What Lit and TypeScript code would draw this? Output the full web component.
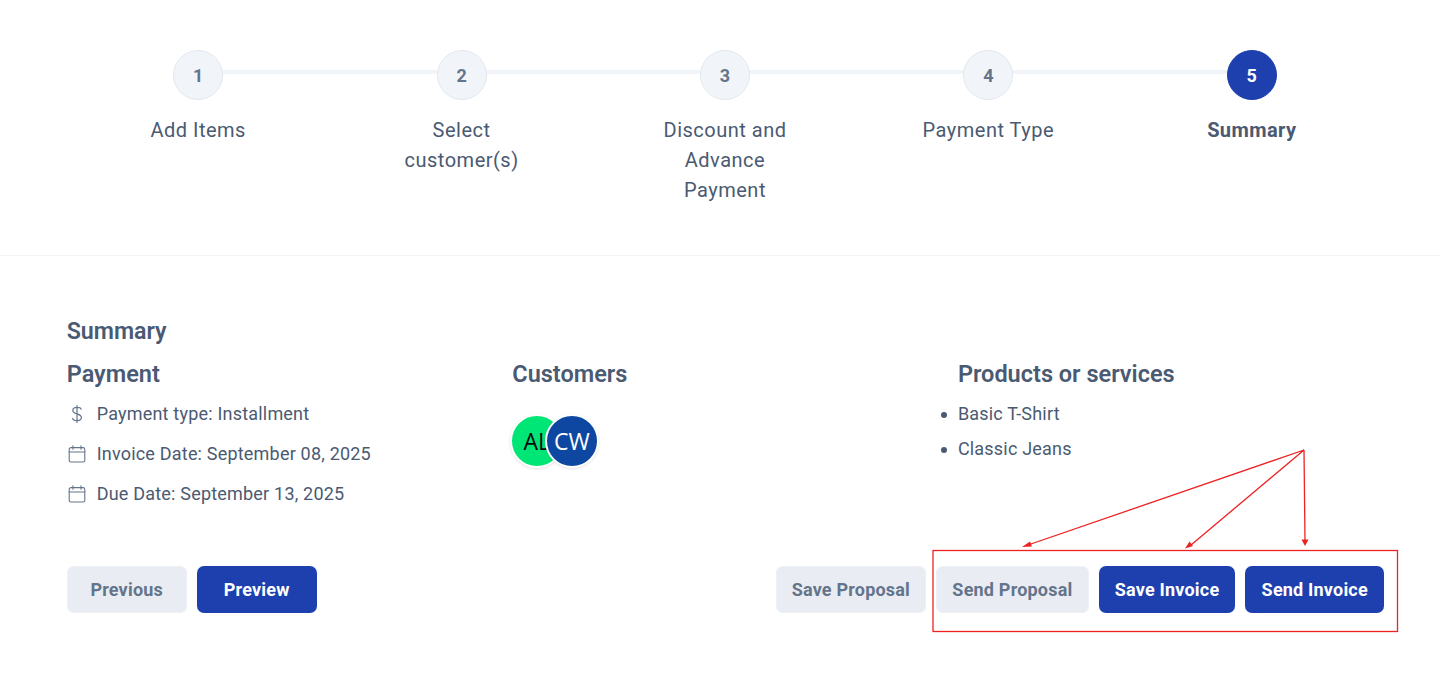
import { LitElement, html, css, svg } from 'lit';
import { customElement } from 'lit/decorators.js';

const steps = ['Add Items', 'Select customer(s)', 'Discount and Advance Payment', 'Payment Type', 'Summary'];

const dollarIcon = html`<svg class="icon" viewBox="0 0 20 20" fill="none" stroke="currentColor" stroke-width="1.2" stroke-linecap="round" stroke-linejoin="round">
  <path d="M10 1.5v17M14 5.2C14 3.9 12.4 3.3 10 3.3S5.8 4.3 5.8 6.4 7.7 9.2 10 9.9s4.4 1.4 4.4 3.7-2 3.1-4.4 3.1-4.3-.8-4.3-2.4"/>
</svg>`;

const calendarIcon = html`<svg class="icon" viewBox="0 0 20 20" fill="none" stroke="currentColor" stroke-width="1.1" stroke-linecap="round" stroke-linejoin="round">
  <rect x="2.2" y="3.6" width="15.6" height="14.4" rx="1.8"/>
  <path d="M2.2 8h15.6M6 1.8v3.4M14 1.8v3.4"/>
</svg>`;

@customElement('app-root')
export class AppRoot extends LitElement {
  static styles = css`
    :host {
      display: block;
      position: relative;
      height: 677px;
      overflow: hidden;
      background: #fff;
      font-family: Roboto, sans-serif;
      color: #4a5a72;
    }
    .stepper {
      display: grid;
      grid-template-columns: repeat(5, 1fr);
      height: 256px;
      padding: 50px 56.5px 0 66.5px;
      box-sizing: border-box;
      border-bottom: 1px solid #f1f5f9;
    }
    .step {
      position: relative;
      display: flex;
      flex-direction: column;
      align-items: center;
    }
    .step:not(:last-child)::after {
      content: '';
      position: absolute;
      top: 20px;
      left: 50%;
      width: 100%;
      height: 4px;
      background: #f1f5f9;
    }
    .num {
      position: relative;
      z-index: 1;
      width: 50px;
      height: 50px;
      box-sizing: border-box;
      display: flex;
      align-items: center;
      justify-content: center;
      border-radius: 50%;
      border: 1px solid #e2e8f0;
      background: #f1f5f9;
      color: #64748b;
      font-size: 18px;
      font-weight: 700;
    }
    .step.active .num {
      background: #1e40af;
      border-color: #1e40af;
      color: #fff;
    }
    .label {
      width: 150px;
      margin-top: 15px;
      text-align: center;
      font-size: 20px;
      line-height: 30px;
      letter-spacing: 0.5px;
    }
    .step.active .label {
      font-weight: 700;
      letter-spacing: 0.4px;
    }
    .body {
      padding: 61px 56px 0 66.7px;
    }
    h2 {
      margin: 0;
      font-size: 23.5px;
      line-height: 28px;
      font-weight: 600;
    }
    h2.title {
      font-size: 23.2px;
    }
    .columns {
      display: grid;
      grid-template-columns: repeat(3, 445.6px);
      margin-top: 15px;
      height: 206px;
    }
    .rows {
      display: flex;
      flex-direction: column;
      gap: 16px;
      margin-top: 14px;
    }
    .row {
      display: flex;
      align-items: center;
      gap: 10px;
      font-size: 18px;
      line-height: 24px;
      letter-spacing: 0.2px;
    }
    .icon {
      width: 20px;
      height: 20px;
      color: #64748b;
    }
    .avatars {
      display: flex;
      margin-top: 26px;
      margin-left: -2.5px;
    }
    .avatar {
      width: 54px;
      height: 54px;
      box-sizing: border-box;
      display: flex;
      align-items: center;
      justify-content: center;
      border-radius: 50%;
      border: 2px solid #fff;
      box-shadow: 0 1px 3px rgba(15, 23, 42, 0.12);
      font-family: "Open Sans", sans-serif;
      font-size: 23px;
    }
    .avatar.green {
      background: #00e676;
      color: #0a0a0a;
    }
    .avatar.blue {
      background: #0d47a1;
      color: #fff;
      margin-left: -19px;
    }
    ul {
      margin: 14px 0 0;
      padding: 0;
      list-style: none;
      display: flex;
      flex-direction: column;
      gap: 11px;
    }
    li {
      position: relative;
      font-size: 18px;
      line-height: 24px;
      letter-spacing: 0.2px;
    }
    li::before {
      content: '';
      position: absolute;
      left: -17px;
      top: 10px;
      width: 6px;
      height: 6px;
      border-radius: 50%;
      background: #4a5a72;
    }
    .actions {
      display: flex;
      justify-content: space-between;
    }
    .group {
      display: flex;
      gap: 10px;
    }
    button {
      height: 47px;
      min-width: 120px;
      padding: 0 16.15px;
      border: 0;
      border-radius: 7px;
      font-family: Roboto, sans-serif;
      font-size: 18px;
      font-weight: 700;
      letter-spacing: 0.2px;
    }
    .muted {
      background: #e9edf3;
      box-shadow: inset 0 0 0 1px #edf1f5;
      color: #64748b;
    }
    .primary {
      background: #1e40af;
      color: #fff;
    }
    .notes {
      position: absolute;
      left: 0;
      top: 0;
      pointer-events: none;
    }
  `;

  render() {
    return html`
      <div class="stepper">
        ${steps.map((label, i) => html`
          <div class="step ${i === 4 ? 'active' : ''}">
            <div class="num">${i + 1}</div>
            <div class="label">${label}</div>
          </div>
        `)}
      </div>
      <div class="body">
        <h2 class="title">Summary</h2>
        <div class="columns">
          <div>
            <h2>Payment</h2>
            <div class="rows">
              <div class="row">${dollarIcon}<span>Payment type: Installment</span></div>
              <div class="row">${calendarIcon}<span>Invoice Date: September 08, 2025</span></div>
              <div class="row">${calendarIcon}<span>Due Date: September 13, 2025</span></div>
            </div>
          </div>
          <div>
            <h2>Customers</h2>
            <div class="avatars">
              <div class="avatar green">AL</div>
              <div class="avatar blue">CW</div>
            </div>
          </div>
          <div>
            <h2>Products or services</h2>
            <ul>
              <li>Basic T-Shirt</li>
              <li>Classic Jeans</li>
            </ul>
          </div>
        </div>
        <div class="actions">
          <div class="group">
            <button class="muted">Previous</button>
            <button class="primary">Preview</button>
          </div>
          <div class="group">
            <button class="muted">Save Proposal</button>
            <button class="muted">Send Proposal</button>
            <button class="primary">Save Invoice</button>
            <button class="primary">Send Invoice</button>
          </div>
        </div>
      </div>
      <svg class="notes" width="1440" height="677" fill="none" stroke="#ee2222" stroke-width="1.3">
        ${svg`
          <rect x="933" y="550.5" width="464.5" height="81"/>
          <path d="M1304 450L1028 545M1304 450L1191 545M1304 450L1305 541"/>
          <path d="M1022 547L1030 541.5L1032 546.5Z M1185 548.5L1189.5 541.5L1193 546Z M1301.5 539.5H1308.5L1305 546Z" fill="#ee2222" stroke="none"/>
        `}
      </svg>
    `;
  }
}
